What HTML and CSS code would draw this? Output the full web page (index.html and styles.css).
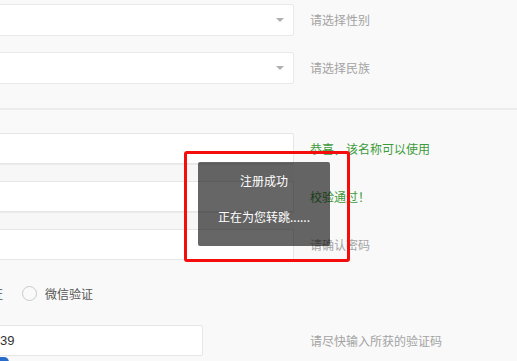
FILE: index.html
```html
<!DOCTYPE html>
<html lang="zh-CN">
<head>
<meta charset="utf-8">
<link rel="stylesheet" href="styles.css">
</head>
<body>
<div class="page">
  <div class="row row-first">
    <div class="select"><span class="caret"></span></div>
    <div class="hint">请选择性别</div>
  </div>
  <div class="row row-second">
    <div class="select"><span class="caret"></span></div>
    <div class="hint">请选择民族</div>
  </div>
  <div class="divider"></div>

  <div class="stack">
    <div class="input"></div>
    <div class="hint ok">恭喜，该名称可以使用</div>
    <div class="strip"></div>
    <div></div>
    <div class="input"></div>
    <div class="hint ok">校验通过！</div>
    <div class="strip"></div>
    <div></div>
    <div class="input"></div>
    <div class="hint">请确认密码</div>
  </div>

  <div class="radio-row">
    <span class="cut">证</span>
    <span class="radio"></span>
    <span class="radio-label">微信验证</span>
  </div>

  <div class="row row-code">
    <div class="code-cell"><div class="code-input">39</div></div>
    <div class="hint">请尽快输入所获的验证码</div>
  </div>
  <div class="btn"></div>

  <div class="highlight"></div>
  <div class="toast">
    <div class="toast-title">注册成功</div>
    <div class="toast-msg">正在为您转跳......</div>
  </div>
</div>
</body>
</html>
```

FILE: styles.css
```css
* { box-sizing: border-box; }
html, body { margin: 0; padding: 0; }
body {
  background: #f9f9f9;
  font-family: "Noto Sans CJK SC", "Liberation Sans", sans-serif;
  font-size: 12px;
}
.page {
  position: relative;
  width: 517px;
  height: 361px;
  overflow: hidden;
  background: #f9f9f9;
}
.row {
  display: flex;
  align-items: center;
}
.row-first { padding-top: 4px; }
.row-second { margin-top: 16px; }
.select {
  width: 304px;
  height: 32px;
  margin-left: -10px;
  background: #fff;
  border: 1px solid #e9e9e9;
  border-radius: 2px;
  display: flex;
  align-items: center;
  justify-content: flex-end;
  padding-right: 9px;
}
.caret {
  width: 0;
  height: 0;
  border-left: 4px solid transparent;
  border-right: 4px solid transparent;
  border-top: 4px solid #b0b0b0;
}
.hint {
  margin-left: 16px;
  color: #a3a3a3;
  font-size: 12px;
  line-height: 16px;
  white-space: nowrap;
}
.hint.ok { color: #3c9b3a; }
.divider {
  margin-top: 24px;
  height: 2px;
  background: #ececec;
}
.stack {
  margin-top: 23px;
  margin-left: -10px;
  display: grid;
  grid-template-columns: 304px auto;
  grid-template-rows: 31px 17px 31px 17px 31px;
  align-items: center;
}
.input {
  height: 31px;
  background: #fff;
  border: 1px solid #e6e6e6;
  border-radius: 2px;
}
.strip {
  height: 17px;
  border-top: 1px solid #ebebeb;
  background: #f7f7f7;
}
.radio-row {
  margin-top: 23px;
  height: 20px;
  display: flex;
  align-items: center;
  color: #555;
  font-size: 12px;
}
.cut { margin-left: -9px; }
.radio {
  margin-left: 19px;
  width: 15px;
  height: 15px;
  border: 1.5px solid #c9c9c9;
  border-radius: 50%;
  background: #fafafa;
}
.radio-label { margin-left: 8px; }
.row-code { margin-top: 22px; }
.code-cell {
  width: 304px;
  margin-left: -10px;
}
.code-input {
  width: 213px;
  height: 31px;
  background: #fff;
  border: 1px solid #e6e6e6;
  border-radius: 2px;
  padding-left: 9px;
  line-height: 29px;
  font-family: "Liberation Sans", sans-serif;
  font-size: 13px;
  color: #333;
}
.btn {
  margin-top: 1px;
  margin-left: -21px;
  width: 30px;
  height: 20px;
  border-radius: 5px;
  background: #2a6ccc;
}
.highlight {
  position: absolute;
  left: 184px;
  top: 151px;
  width: 166px;
  height: 111px;
  border: 3px solid #f50d0d;
  border-radius: 3px;
}
.toast {
  position: absolute;
  left: 198px;
  top: 162px;
  width: 132px;
  height: 84px;
  background: rgba(0, 0, 0, 0.6);
  border-radius: 2px;
  color: #fff;
  text-align: center;
  font-size: 12px;
  line-height: 16px;
}
.toast-title { margin-top: 11px; }
.toast-msg { margin-top: 20px; }
```
